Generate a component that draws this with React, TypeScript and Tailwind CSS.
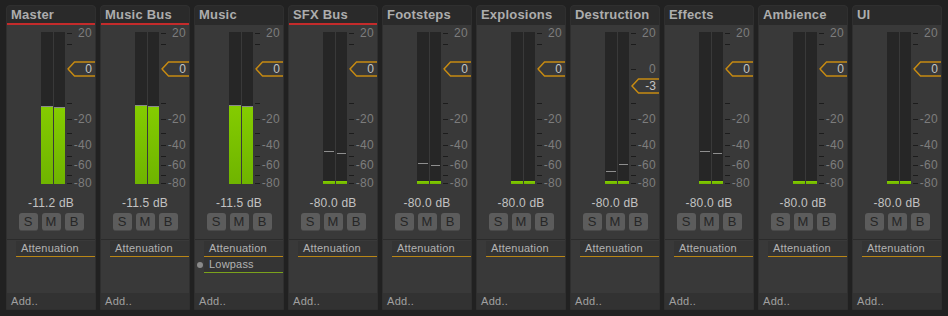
const channels = [
  { name: "Master", bus: true, db: "-11.2 dB", fader: "0", faderAt: 37, l: 78, r: 77, pl: null, pr: null, fx: ["Attenuation"] },
  { name: "Music Bus", bus: true, db: "-11.5 dB", fader: "0", faderAt: 37, l: 79, r: 78, pl: null, pr: null, fx: ["Attenuation"] },
  { name: "Music", bus: false, db: "-11.5 dB", fader: "0", faderAt: 37, l: 79, r: 78, pl: null, pr: null, fx: ["Attenuation", "Lowpass"] },
  { name: "SFX Bus", bus: true, db: "-80.0 dB", fader: "0", faderAt: 37, l: 3, r: 3, pl: 119, pr: 121, fx: ["Attenuation"] },
  { name: "Footsteps", bus: false, db: "-80.0 dB", fader: "0", faderAt: 37, l: 3, r: 3, pl: 131, pr: 133, fx: ["Attenuation"] },
  { name: "Explosions", bus: false, db: "-80.0 dB", fader: "0", faderAt: 37, l: 3, r: 3, pl: null, pr: null, fx: ["Attenuation"] },
  { name: "Destruction", bus: false, db: "-80.0 dB", fader: "-3", faderAt: 54, l: 3, r: 3, pl: 139, pr: 132, fx: ["Attenuation"] },
  { name: "Effects", bus: false, db: "-80.0 dB", fader: "0", faderAt: 37, l: 3, r: 3, pl: 119, pr: 121, fx: ["Attenuation"] },
  { name: "Ambience", bus: false, db: "-80.0 dB", fader: "0", faderAt: 37, l: 3, r: 3, pl: null, pr: null, fx: ["Attenuation"] },
  { name: "UI", bus: false, db: "-80.0 dB", fader: "0", faderAt: 37, l: 3, r: 3, pl: null, pr: null, fx: ["Attenuation"] },
]

// tick offsets from the top of the meter (152px tall)
const ticks = [1, 12, 37, 71, 87, 101, 113, 124, 133, 143, 151]
const labels = [
  { t: "20", y: 1 },
  { t: "0", y: 37 },
  { t: "-20", y: 87 },
  { t: "-40", y: 113 },
  { t: "-60", y: 133 },
  { t: "-80", y: 151 },
]

function Bar({ w, level, peak }: { w: string; level: number; peak: number | null }) {
  const tall = level > 10
  return (
    <div className={`relative flex h-full flex-col justify-end bg-[#262626] ${w}`}>
      {peak !== null && (
        <div className="absolute left-[1px] right-[1px] h-[1px] bg-[#8e8e8e]" style={{ top: peak }} />
      )}
      <div
        className={`w-full bg-gradient-to-b from-[#84cc00] to-[#6fb400] ${tall ? "border-t border-[#8a8a8a]" : ""}`}
        style={{ height: level }}
      />
    </div>
  )
}

function Strip({ ch }: { ch: (typeof channels)[number] }) {
  return (
    <div className="flex h-[305px] w-[90px] flex-col overflow-hidden rounded-t-[4px] border border-[#2f2f2f] bg-[#393939]">
      {/* header */}
      <div
        className={`h-[19px] shrink-0 border-b-2 bg-[#2a2a2a] pl-[4px] text-[13px] font-bold leading-[17px] tracking-[0.2px] text-[#adadad] ${
          ch.bus ? "border-[#c42b2b]" : "border-[#2a2a2a]"
        }`}
      >
        {ch.name}
      </div>

      {/* meters + scale */}
      <div className="relative mt-[7px] flex h-[152px] shrink-0 pl-[34px]">
        <div className="flex h-full gap-[1px]">
          <Bar w="w-[12px]" level={ch.l} peak={ch.pl} />
          <Bar w="w-[11px]" level={ch.r} peak={ch.pr} />
        </div>
        <div className="relative ml-[2px] h-full w-[28px]">
          {ticks.map((y) => (
            <div key={y} className="absolute left-0 h-[1px] w-[5px] bg-[#1c1c1c]" style={{ top: y }} />
          ))}
          {labels.map((l) => (
            <span
              key={l.t}
              className="absolute right-[3px] text-[12px] leading-[14px] tracking-[0.3px] text-[#7d7d7d]"
              style={{ top: l.y - 7 }}
            >
              {l.t}
            </span>
          ))}
        </div>
        {/* fader handle */}
        <div className="absolute left-[60px] h-[16px] w-[30px]" style={{ top: ch.faderAt - 8 }}>
          <svg width="30" height="16" className="absolute inset-0">
            <polygon points="1,8 7.5,1 29,1 29,15 7.5,15" fill="#393939" stroke="#c68a12" strokeWidth="1.5" />
          </svg>
          <span className="absolute right-[5px] top-0 text-[12px] leading-[16px] text-[#c4c4c4]">{ch.fader}</span>
        </div>
      </div>

      {/* readout */}
      <div className="mt-[12px] h-[14px] shrink-0 text-center text-[12px] leading-[14px] tracking-[0.2px] text-[#c2c2c2]">
        {ch.db}
      </div>

      {/* S M B */}
      <div className="mt-[3px] flex h-[18px] shrink-0 justify-center gap-[4px]">
        {["S", "M", "B"].map((b) => (
          <div
            key={b}
            className="flex w-[19px] items-center justify-center rounded-[3px] border-b border-[#4a4a4a] bg-[#5c5c5c] text-[13px] text-[#262626]"
          >
            {b}
          </div>
        ))}
      </div>

      {/* effects */}
      <div className="mt-[8px] flex shrink-0 flex-col border-t border-[#2b2b2b] pt-[1px]">
        {ch.fx.map((f) => (
          <div key={f} className="flex h-[16px] items-center">
            <div className="flex w-[9px] justify-center">
              {f === "Lowpass" && <div className="ml-[1px] h-[6px] w-[6px] rounded-full bg-[#8a8a8a]" />}
            </div>
            <div
              className={`h-[16px] flex-1 border-b bg-[#343434] pl-[5px] text-[11px] leading-[15px] tracking-[0.2px] text-[#b2b2b2] ${
                f === "Lowpass" ? "border-[#7ba21c]" : "border-[#b98616]"
              }`}
            >
              {f}
            </div>
          </div>
        ))}
      </div>

      {/* footer */}
      <div className="mt-auto h-[16px] shrink-0 bg-[#323232] pl-[4px] text-[11px] leading-[16px] tracking-[0.3px] text-[#a0a0a0]">
        Add..
      </div>
    </div>
  )
}

export default function App() {
  return (
    <div
      className="flex h-[316px] w-[948px] gap-[4px] bg-[#212121] pl-[6px] pt-[5px]"
      style={{ fontFamily: '"Liberation Sans", Arial, sans-serif' }}
    >
      {channels.map((ch) => (
        <Strip key={ch.name} ch={ch} />
      ))}
    </div>
  )
}
